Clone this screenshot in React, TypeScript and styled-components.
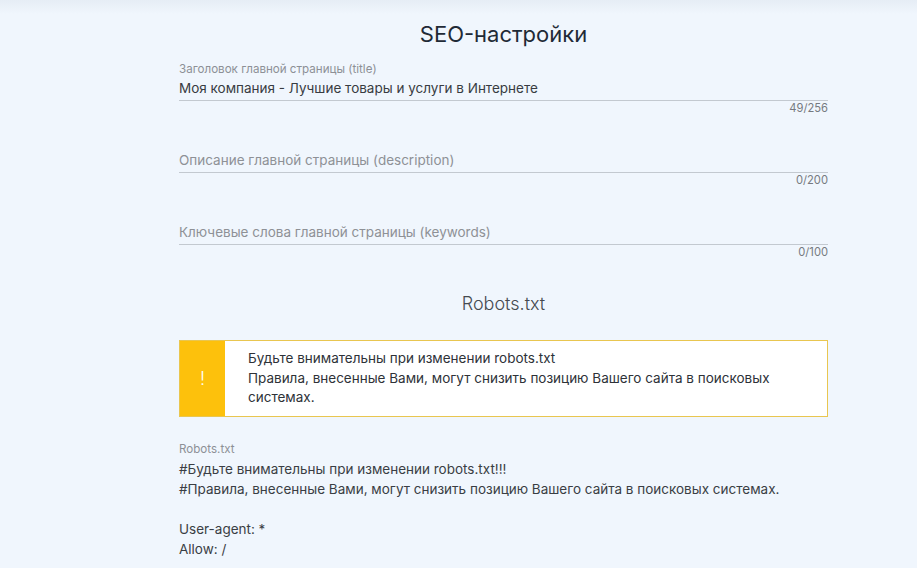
import React from "react";
import styled, { createGlobalStyle } from "styled-components";

const Global = createGlobalStyle`
  html, body { margin: 0; padding: 0; }
  body {
    background: #f0f6fd;
    font-family: Inter, "Noto Sans", sans-serif;
    color: #333;
  }
`;

const Page = styled.div`
  min-height: 568px;
  box-sizing: border-box;
  padding-left: 90px;
  background: linear-gradient(to bottom, #e6edf5 0px, #f0f6fd 14px);
`;

const Column = styled.main`
  width: 649px;
  margin: 0 auto;
  padding-top: 20px;
  display: flex;
  flex-direction: column;
`;

const Title = styled.h1`
  margin: 0 0 14px;
  text-align: center;
  font-size: 22px;
  line-height: 28px;
  font-weight: 400;
  color: #1f2a36;
`;

const Field = styled.div`
  display: flex;
  flex-direction: column;
  margin-bottom: 19px;
`;

const FieldLabel = styled.label<{ $hidden?: boolean }>`
  font-size: 11.6px;
  line-height: 14px;
  height: 14px;
  color: #8d9096;
  visibility: ${(p) => (p.$hidden ? "hidden" : "visible")};
`;

const Input = styled.input`
  border: none;
  border-bottom: 1px solid #c3c9d0;
  background: transparent;
  padding: 0;
  height: 24px;
  font-family: inherit;
  font-size: 13.5px;
  color: #383c42;
  outline: none;
  &::placeholder { color: #8e9196; }
`;

const Counter = styled.div`
  text-align: right;
  font-size: 11.2px;
  line-height: 14px;
  color: #767a80;
`;

const SubTitle = styled.h2`
  margin: 14px 0 0;
  text-align: center;
  font-size: 18px;
  line-height: 24px;
  font-weight: 300;
  color: #454a50;
`;

const Alert = styled.div`
  margin-top: 24px;
  display: flex;
  border: 1px solid #e9c650;
  background: #fff;
  min-height: 74px;
`;

const AlertMark = styled.div`
  width: 45px;
  flex: 0 0 45px;
  background: #fdc10c;
  color: #fff;
  display: flex;
  align-items: center;
  justify-content: center;
  font-size: 18px;
  font-weight: 300;
`;

const AlertText = styled.div`
  padding: 8px 20px 8px 23px;
  font-size: 13.5px;
  line-height: 19.5px;
  color: #2e3238;
`;

const RobotsLabel = styled.div`
  margin-top: 25px;
  font-size: 11.6px;
  line-height: 14px;
  color: #8d9096;
`;

const RobotsText = styled.pre`
  margin: 3px 0 0;
  font-family: inherit;
  font-size: 13.5px;
  line-height: 20px;
  color: #3a3e44;
  white-space: pre-wrap;
`;

const fields = [
  { label: "Заголовок главной страницы (title)", value: "Моя компания - Лучшие товары и услуги в Интернете", max: 256 },
  { label: "Описание главной страницы (description)", value: "", max: 200 },
  { label: "Ключевые слова главной страницы (keywords)", value: "", max: 100 },
];

const robots = `#Будьте внимательны при изменении robots.txt!!!
#Правила, внесенные Вами, могут снизить позицию Вашего сайта в поисковых системах.

User-agent: *
Allow: /`;

export default function App() {
  return (
    <>
      <Global />
      <Page>
        <Column>
          <Title>SEO-настройки</Title>
          {fields.map((f) => (
            <Field key={f.label}>
              <FieldLabel $hidden={!f.value}>{f.label}</FieldLabel>
              <Input defaultValue={f.value} placeholder={f.value ? "" : f.label} readOnly />
              <Counter>
                {f.value.length}/{f.max}
              </Counter>
            </Field>
          ))}
          <SubTitle>Robots.txt</SubTitle>
          <Alert>
            <AlertMark>!</AlertMark>
            <AlertText>
              Будьте внимательны при изменении robots.txt
              <br />
              Правила, внесенные Вами, могут снизить позицию Вашего сайта в поисковых системах.
            </AlertText>
          </Alert>
          <RobotsLabel>Robots.txt</RobotsLabel>
          <RobotsText>{robots}</RobotsText>
        </Column>
      </Page>
    </>
  );
}
